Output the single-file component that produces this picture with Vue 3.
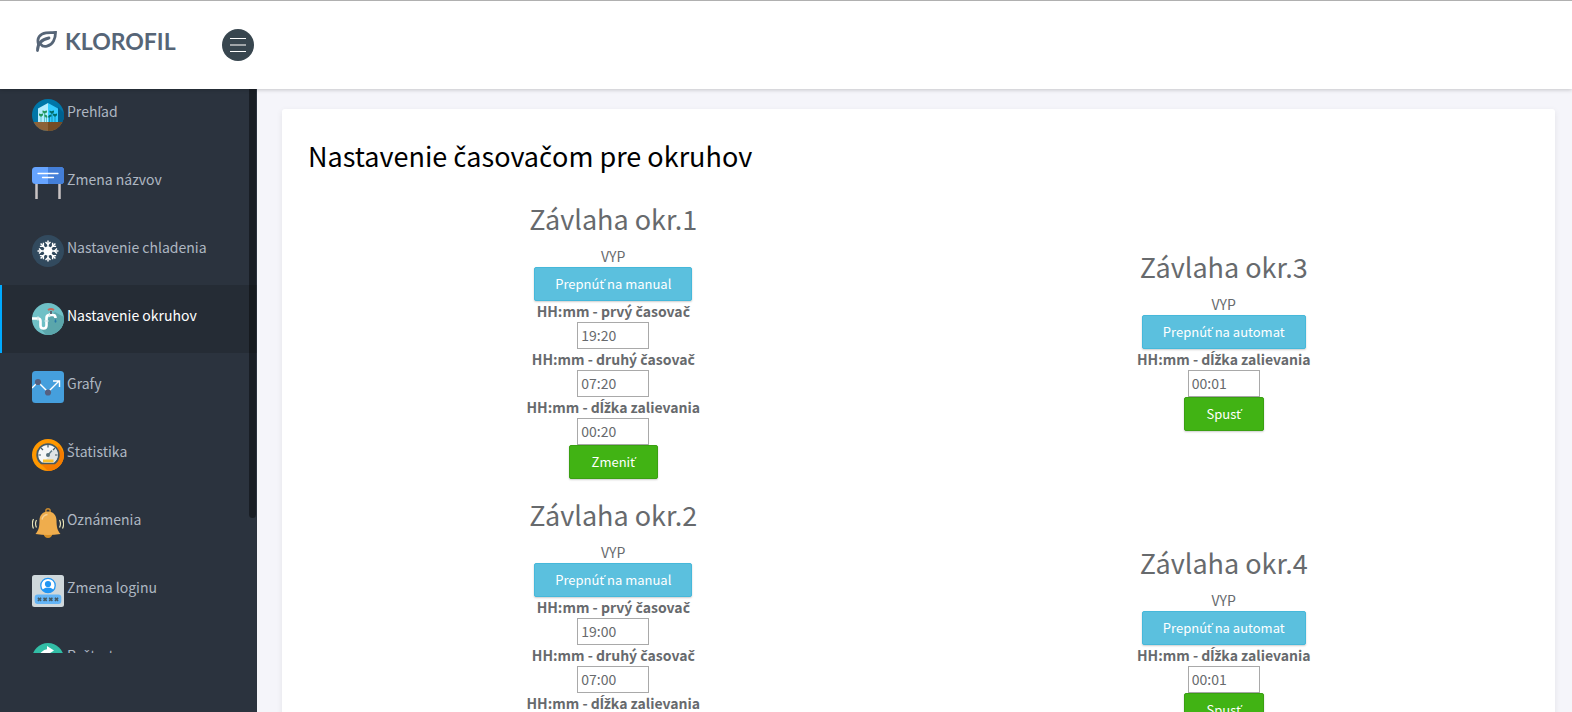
<template>
  <div class="wrapper">
    <header class="navbar">
      <a class="brand" href="#">
        <svg class="brand-leaf" viewBox="0 0 24 24" width="24" height="24" aria-hidden="true">
          <path d="M3.500 21.500C3.500 15.500 7 10.500 15 9" />
          <path d="M4.500 15.500C2.500 9 6 4.500 12 3.800C15.500 3.400 19 3.800 21.500 3.500C21.500 9.500 19 16 13 17.200C10 17.800 8 17 7 15.500" />
        </svg>
        <span>KLOROFIL</span>
      </a>
      <button class="btn-toggle" type="button" aria-label="Menu">
        <span class="bar"></span>
        <span class="bar middle"></span>
        <span class="bar"></span>
      </button>
    </header>

    <div class="page">
      <aside class="sidebar">
        <nav class="sidebar-scroll">
          <ul class="menu">
            <li v-for="item in menu" :key="item.icon">
              <a href="#" :class="{ active: item.icon === current }" @click.prevent="current = item.icon">
                <svg class="menu-icon" viewBox="0 0 32 32" width="32" height="32" aria-hidden="true">
                  <g v-if="item.icon === 'home'">
                    <circle cx="16" cy="16" r="16" fill="#0076a8" />
                    <path d="M26 8L32 14V20L30 23H26Z" fill="#00618f" />
                    <path d="M1.600 23H30.400A16 16 0 0 1 16 32A16 16 0 0 1 1.600 23Z" fill="#8c6239" />
                    <path d="M16 23H30.400A16 16 0 0 1 16 32Z" fill="#754c24" />
                    <path d="M6 9.500L16 4V23H6Z" fill="#b3ecff" />
                    <path d="M26 9.500L16 4V23H26Z" fill="#33ccff" />
                    <path d="M9 23V17M12.500 23V14M14.500 23V18" stroke="#5cc2c9" fill="none" />
                    <path d="M17.500 23V18M20 23V14M23 23V17" stroke="#1793b5" fill="none" />
                    <path d="M7 15.500Q9 15.500 9 17.500Q9 15.500 11 15.500M10.500 12.500Q12.500 12.500 12.500 14.500Q12.500 12.500 15 12.500M12.500 16.500Q14.500 16.500 14.500 18.500" stroke="#22965a" stroke-width="1.800" fill="none" />
                    <path d="M17.500 12.500Q19.500 12.500 20 14.500Q20 12.500 22 12.500M21 15.500Q23 15.500 23 17.500Q23 15.500 25 15.500M17 18.500Q17 16.500 19.500 16.500" stroke="#006d6b" stroke-width="1.800" fill="none" />
                  </g>
                  <g v-else-if="item.icon === 'sign'">
                    <path d="M4.500 16V32M27.500 16V32" stroke="#c9c3c3" stroke-width="2.500" />
                    <rect width="32" height="17" rx="3.500" fill="#66a4ff" />
                    <path d="M16 0H28.500A3.500 3.500 0 0 1 32 3.500V13.500A3.500 3.500 0 0 1 28.500 17H16Z" fill="#447fd8" />
                    <path d="M6 6.500H26M10.500 10.500H21.500" stroke="#fff" stroke-width="1.300" stroke-linecap="round" />
                  </g>
                  <g v-else-if="item.icon === 'snow'">
                    <circle cx="16" cy="16" r="16" fill="#324a5e" />
                    <circle cx="16" cy="16" r="4.500" fill="#fff" />
                    <g v-for="angle in snowArms" :key="angle" :transform="`rotate(${angle} 16 16)`" stroke="#fff" fill="none">
                      <path d="M16 16V5.500" stroke-width="1.500" />
                      <path d="M13.500 7L16 9.500L18.500 7" stroke-width="1.400" />
                    </g>
                  </g>
                  <g v-else-if="item.icon === 'tap'">
                    <circle cx="16" cy="16" r="16" fill="#6fc0c6" />
                    <path d="M8 25L14 31.800A16 16 0 0 0 31.900 14L23 9L15 17L13 25Z" fill="#5ba6ab" />
                    <path d="M0 15.500H6Q8.500 15.500 8.500 18V22.500Q8.500 25.500 11.500 25.500Q14.500 25.500 14.500 22.500V15Q14.500 12 17.500 12H21Q23.500 12 23.500 15" stroke="#fff" stroke-width="2.600" fill="none" />
                    <path d="M6 13.500V17.500M12.500 18H16.500M17.500 10V14" stroke="#d8eaec" stroke-width="1.500" />
                    <path d="M19 8V11" stroke="#5b6a75" stroke-width="2" />
                    <path d="M16 7Q19 5 22 7" stroke="#c9685a" stroke-width="2" fill="none" />
                    <path d="M23.500 16Q25.500 19 23.500 19.800Q21.500 19 23.500 16Z" fill="#2878a8" />
                  </g>
                  <g v-else-if="item.icon === 'chart'">
                    <rect width="32" height="32" rx="3.500" fill="#459fdd" />
                    <path d="M0 17L6 11L16 21L27 10M21 10H27.500V16" stroke="#fff" stroke-width="1.400" fill="none" />
                    <circle cx="6" cy="11" r="3.100" fill="#556080" />
                    <circle cx="16" cy="21.500" r="3.100" fill="#556080" />
                  </g>
                  <g v-else-if="item.icon === 'gauge'">
                    <circle cx="16" cy="16" r="16" fill="#ff9800" />
                    <path d="M27 7L31.800 14A16 16 0 0 1 16 32L9 25Z" fill="#f57c00" />
                    <path d="M9 25.300A11.700 11.700 0 1 1 23 25.300Z" fill="#455a64" />
                    <path d="M10 23.500A9.800 9.800 0 1 1 22 23.500Z" fill="#f4f6f7" />
                    <path d="M23 9A9.800 9.800 0 0 1 22 23.500H12Z" fill="#dfe4e6" />
                    <path d="M16 6V8.500M6.500 16H9M23 16H25.500M9 9L11 11M23 9L21 11" stroke="#455a64" stroke-width="1.200" />
                    <path d="M16 16L20 11.500" stroke="#607d8b" stroke-width="1.600" />
                    <circle cx="16" cy="16" r="2" fill="#546e7a" />
                    <rect x="11" y="20.500" width="10.500" height="2.800" fill="#fbc02d" />
                  </g>
                  <g v-else-if="item.icon === 'bell'">
                    <circle cx="16" cy="4" r="2.200" stroke="#c98a2f" stroke-width="1.400" fill="none" />
                    <path d="M11.500 27H20.500Q19.500 31 16 31Q12.500 31 11.500 27Z" fill="#d68f26" />
                    <path d="M16 4.500C21.500 4.500 24.500 8.500 24.500 13.500C24.500 20 25.500 23.500 28.500 27Q16 29 3.500 27C6.500 23.500 7.500 20 7.500 13.500C7.500 8.500 10.500 4.500 16 4.500Z" fill="#efad4d" />
                    <path d="M10 12.500Q11 8 15.500 7.500" stroke="#f7d193" stroke-width="1.300" fill="none" />
                    <path d="M4.500 13Q2.500 16.500 4.500 20.500M1.500 12Q-.8 16.500 1.500 21.500M27.500 13Q29.500 16.500 27.500 20.500M30.500 12Q32.800 16.500 30.500 21.500" stroke="#e6e2b8" stroke-width="1.200" fill="none" />
                  </g>
                  <g v-else-if="item.icon === 'login'">
                    <rect width="32" height="32" rx="2.500" fill="#cfd8dc" />
                    <circle cx="16" cy="10.500" r="7.200" fill="#fff" stroke="#2196f3" stroke-width="1.300" />
                    <circle cx="16" cy="9" r="3.100" fill="#2196f3" />
                    <path d="M10.500 15.500Q11 12.800 16 12.500Q21 12.800 21.500 15.500Q16 20 10.500 15.500Z" fill="#2196f3" />
                    <rect x="2.700" y="19.500" width="26.600" height="9.500" rx="3" fill="#64b5f6" />
                    <path v-for="x in starOffsets" :key="x" :transform="`translate(${x} 24.300)`" d="M-1.600 -1.600L1.600 1.600M1.600 -1.600L-1.600 1.600" stroke="#455a64" stroke-width="1.600" />
                  </g>
                  <g v-else>
                    <circle cx="16" cy="16" r="16" fill="#32bea6" />
                    <path d="M8.500 16A8 8 0 0 1 16 8" stroke="#fff" stroke-width="4" fill="none" />
                    <path d="M15 3L22 7.500L15 12Z" fill="#fff" />
                    <path d="M23.500 16A8 8 0 0 1 16 24" stroke="#fff" stroke-width="4" fill="none" />
                    <path d="M17 20L10 24.500L17 29Z" fill="#fff" />
                  </g>
                </svg>
                <span><SlovakText :text="item.label" /></span>
              </a>
            </li>
          </ul>
          <div class="scroll-thumb"></div>
        </nav>
      </aside>

      <main class="content">
        <section class="panel">
          <h1><SlovakText text="Nastavenie časovačom pre okruhov" /></h1>
          <div class="circuits">
            <form v-for="c in circuits" :key="c.id" class="circuit" @submit.prevent>
              <h2>{{ c.name }}</h2>
              <div class="state">VYP</div>
              <button class="btn btn-info" type="button"><SlovakText :text="c.toggle" /></button>
              <template v-for="(field, i) in c.fields" :key="i">
                <label :for="`c${c.id}-${i}`"><SlovakText :text="field.label" /></label>
                <input :id="`c${c.id}-${i}`" v-model="field.value" type="text" />
              </template>
              <button class="btn btn-success" type="submit"><SlovakText :text="c.submit" /></button>
            </form>
          </div>
        </section>
      </main>
    </div>
  </div>
</template>

<script setup>
import { h, reactive, ref } from 'vue'

const SlovakText = (props) =>
  props.text
    .split(/([čďľĺňšťžČĎĽŇŠŤŽ]+)/)
    .map((part, i) => (i % 2 ? h('span', { class: 'caron' }, part) : part))
SlovakText.props = ['text']

const current = ref('tap')

const menu = [
  { icon: 'home', label: 'Prehľad' },
  { icon: 'sign', label: 'Zmena názvov' },
  { icon: 'snow', label: 'Nastavenie chladenia' },
  { icon: 'tap', label: 'Nastavenie okruhov' },
  { icon: 'chart', label: 'Grafy' },
  { icon: 'gauge', label: 'Štatistika' },
  { icon: 'bell', label: 'Oznámenia' },
  { icon: 'login', label: 'Zmena loginu' },
  { icon: 'restart', label: 'Reštart' }
]

const snowArms = [0, 45, 90, 135, 180, 225, 270, 315]
const starOffsets = [7.5, 13.1, 18.8, 24.5]

const timers = (first, second, length) => [
  { label: 'HH:mm - prvý časovač', value: first },
  { label: 'HH:mm - druhý časovač', value: second },
  { label: 'HH:mm - dĺžka zalievania', value: length }
]

const manual = (length) => [{ label: 'HH:mm - dĺžka zalievania', value: length }]

const circuits = reactive([
  { id: 1, name: 'Závlaha okr.1', toggle: 'Prepnúť na manual', submit: 'Zmeniť', fields: timers('19:20', '07:20', '00:20') },
  { id: 3, name: 'Závlaha okr.3', toggle: 'Prepnúť na automat', submit: 'Spusť', fields: manual('00:01') },
  { id: 2, name: 'Závlaha okr.2', toggle: 'Prepnúť na manual', submit: 'Zmeniť', fields: timers('19:00', '07:00', '00:20') },
  { id: 4, name: 'Závlaha okr.4', toggle: 'Prepnúť na automat', submit: 'Spusť', fields: manual('00:01') }
])
</script>

<style>
body {
  margin: 0;
  background: #f5f5fa;
}

.caron {
  font-family: 'Noto Sans', sans-serif;
  line-height: 1;
}
</style>

<style scoped>
* {
  box-sizing: border-box;
}

.wrapper {
  display: flex;
  flex-direction: column;
  height: 100vh;
  overflow: hidden;
  font-family: 'Source Sans Pro', 'Noto Sans CJK SC', 'Noto Sans', sans-serif;
  font-size: 14px;
  line-height: 21px;
  color: #676a6d;
}

.navbar {
  position: relative;
  z-index: 2;
  display: flex;
  flex-shrink: 0;
  align-items: flex-start;
  gap: 46px;
  height: 89px;
  padding: 28px 34px;
  background: #fff;
  border-top: 1px solid #b0b0b0;
  box-shadow: 0 1px 4px rgba(0, 0, 0, 0.2);
}

.brand {
  display: flex;
  gap: 7px;
  font-family: Lato, sans-serif;
  font-size: 23px;
  font-weight: 700;
  line-height: 24px;
  color: #566577;
  text-decoration: none;
}

.brand-leaf {
  fill: none;
  stroke: #566577;
  stroke-width: 2.8;
  stroke-linecap: round;
}

.btn-toggle {
  display: flex;
  flex-direction: column;
  align-items: center;
  justify-content: center;
  gap: 5px;
  width: 32px;
  height: 32px;
  padding: 0;
  background: #38464f;
  border: 0;
  border-radius: 50%;
}

.bar {
  width: 16px;
  height: 1px;
  background: #fff;
}

.bar.middle {
  height: 2px;
  background: #a0a5a8;
}

.page {
  display: flex;
  flex: 1;
  min-height: 0;
}

.sidebar {
  flex: 0 0 257px;
  padding-bottom: 59px;
  background: #2b333e;
}

.sidebar-scroll {
  position: relative;
  height: 100%;
  overflow: hidden;
}

.menu {
  margin: -8px 0 0;
  padding: 0;
  list-style: none;
}

.menu a {
  display: flex;
  align-items: flex-start;
  gap: 3px;
  padding: 18px 30px;
  border-left: 2px solid transparent;
  line-height: 24px;
  color: #aeb7c2;
  text-decoration: none;
}

.menu a.active {
  background: #252c35;
  border-left-color: #00aaff;
  color: #fff;
}

.menu-icon {
  flex-shrink: 0;
}

.scroll-thumb {
  position: absolute;
  top: 0;
  right: 1px;
  width: 7px;
  height: 429px;
  background: rgba(0, 0, 0, 0.4);
  border-radius: 0 0 4px 4px;
}

.content {
  flex: 1;
  min-width: 0;
  padding: 20px 17px 20px 25px;
}

.panel {
  padding: 30px 26px;
  background: #fff;
  border-radius: 3px;
  box-shadow: 0 2px 6px rgba(0, 0, 0, 0.08);
}

h1,
h2 {
  margin: 0;
  font-size: 27px;
  font-weight: 400;
  line-height: 33px;
}

h1 {
  margin-bottom: 10px;
  color: #000;
}

h2 {
  margin: 19px 0 11px;
}

.circuits {
  display: grid;
  grid-template-columns: 1fr 1fr;
  align-items: center;
  padding-top: 1px;
}

.circuit {
  display: flex;
  flex-direction: column;
  align-items: center;
}

label {
  font-weight: 700;
}

input {
  width: 72px;
  height: 27px;
  padding: 0 3px 2px;
  border: 1px solid #a9a9a9;
  font: inherit;
  color: inherit;
}

.btn {
  height: 34px;
  padding: 0 20px 2px;
  border: 1px solid;
  border-radius: 2px;
  box-shadow: 0 1px 2px rgba(0, 0, 0, 0.2);
  font: inherit;
  font-size: 13px;
  color: #fff;
}

.btn-info {
  background: #5bc0de;
  border-color: #46b8da;
}

.btn-success {
  padding: 0 22px 2px;
  background: #41b314;
  border-color: #3aa012;
}
</style>
